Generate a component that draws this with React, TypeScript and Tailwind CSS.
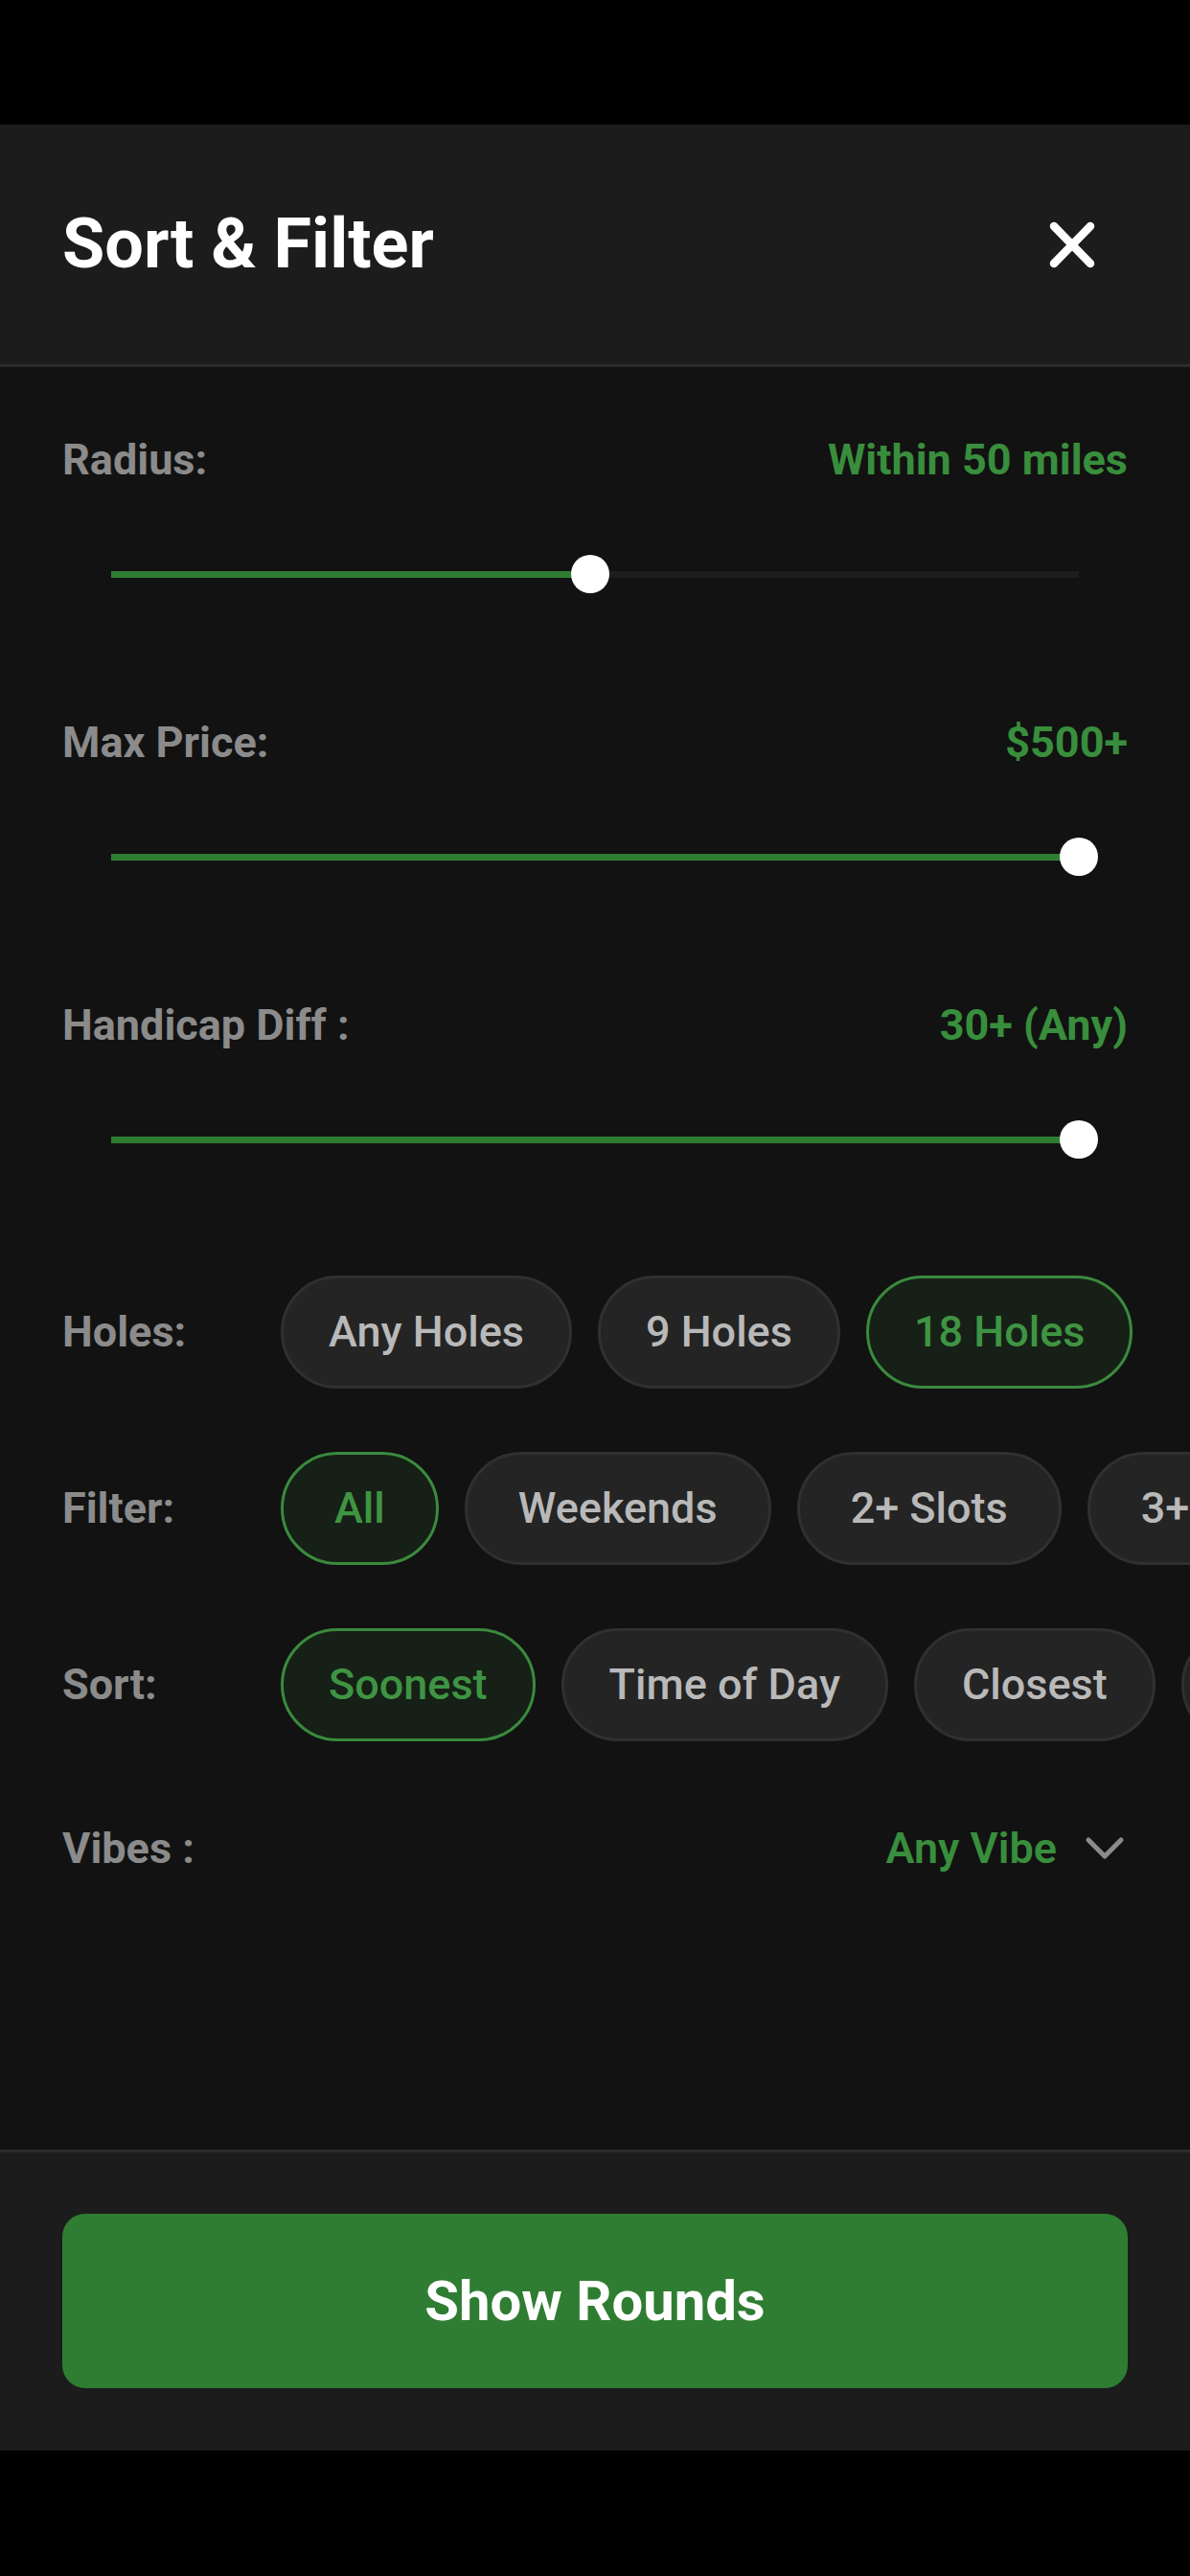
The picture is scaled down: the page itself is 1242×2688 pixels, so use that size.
import React from 'react';

const font = { fontFamily: 'Roboto, "Noto Sans", Arial, sans-serif' };

interface SliderRowProps {
  label: string;
  value: string;
  pct: number;
}

function SliderRow({ label, value, pct }: SliderRowProps) {
  return (
    <div className="flex flex-col">
      <div className="flex items-center justify-between h-[54px] leading-[54px] text-[45px] font-bold">
        <span className="text-[#8b8b8b]">{label}</span>
        <span className="text-[#388e3c]">{value}</span>
      </div>
      <div className="mt-[62px] h-[60px] px-[51px] flex items-center">
        <div className="relative w-full h-[7px] bg-[#1d1d1d]">
          <div className="absolute left-0 top-0 h-full bg-[#2e7d32]" style={{ width: `${pct}%` }} />
          <div
            className="absolute top-1/2 w-[40px] h-[40px] -ml-[20px] -mt-[20px] rounded-full bg-white"
            style={{ left: `${pct}%` }}
          />
        </div>
      </div>
    </div>
  );
}

interface PillRowProps {
  label: string;
  options: string[];
  selected: string;
  wide?: boolean;
}

function PillRow({ label, options, selected, wide }: PillRowProps) {
  return (
    <div className="flex items-center mr-[-65px]">
      <span className="w-[228px] shrink-0 text-[45px] font-bold text-[#8b8b8b] leading-[54px]">{label}</span>
      <div className="flex gap-[27px] overflow-hidden">
        {options.map((opt) => {
          const active = opt === selected;
          return (
            <div
              key={opt}
              className={`h-[118px] shrink-0 ${wide ? 'px-[53px]' : 'px-[47px]'} rounded-full border-[3px] flex items-center text-[45px] font-medium whitespace-nowrap ${
                active
                  ? 'bg-[#162016] border-[#3a8a3e] text-[#3f9443]'
                  : 'bg-[#242424] border-[#303030] text-[#b9b9b9]'
              }`}
            >
              {opt}
            </div>
          );
        })}
      </div>
    </div>
  );
}

export default function App() {
  return (
    <div className="w-[1242px] h-[2688px] bg-black flex flex-col" style={font}>
      <div className="h-[130px] shrink-0" />

      {/* header */}
      <div className="h-[253px] shrink-0 bg-[#1c1c1c] border-b-[3px] border-[#2c2c2c] px-[65px] flex items-center justify-between">
        <h1 className="text-[72px] font-bold text-white leading-none">Sort &amp; Filter</h1>
        <svg width="48" height="49" viewBox="0 0 48 49" className="mr-[34px]">
          <path d="M5 5 L43 44 M43 5 L5 44" stroke="white" strokeWidth="8.5" strokeLinecap="round" fill="none" />
        </svg>
      </div>

      {/* body */}
      <div className="flex-1 bg-[#121212] pt-[70px] pl-[65px] pr-[65px] flex flex-col overflow-hidden">
        <div className="flex flex-col gap-[119px]">
          <SliderRow label="Radius:" value="Within 50 miles" pct={49.5} />
          <SliderRow label="Max Price:" value="$500+" pct={100} />
          <SliderRow label="Handicap Diff :" value="30+ (Any)" pct={100} />
        </div>

        <div className="mt-[112px] flex flex-col gap-[66px]">
          <PillRow label="Holes:" options={['Any Holes', '9 Holes', '18 Holes']} selected="18 Holes" />
          <PillRow label="Filter:" options={['All', 'Weekends', '2+ Slots', '3+ Slots']} selected="All" wide />
          <PillRow label="Sort:" options={['Soonest', 'Time of Day', 'Closest', 'Cheapest']} selected="Soonest" />
        </div>

        <div className="mt-[85px] flex items-center justify-between h-[54px] text-[45px] font-bold leading-[54px]">
          <span className="text-[#8b8b8b]">Vibes :</span>
          <div className="flex items-center gap-[26px]">
            <span className="text-[#388e3c] font-semibold">Any Vibe</span>
            <svg width="48" height="48" viewBox="0 0 48 48">
              <path d="M7 15 L24 32 L41 15" stroke="#8b8b8b" strokeWidth="5" strokeLinecap="round" strokeLinejoin="round" fill="none" />
            </svg>
          </div>
        </div>
      </div>

      {/* footer */}
      <div className="shrink-0 bg-[#1c1c1c] border-t-[3px] border-[#2c2c2c] px-[65px] pt-[64px] pb-[65px]">
        <button className="w-full h-[182px] rounded-[24px] bg-[#2f7d32] text-white text-[58px] font-bold">
          Show Rounds
        </button>
      </div>

      <div className="h-[131px] shrink-0" />
    </div>
  );
}
